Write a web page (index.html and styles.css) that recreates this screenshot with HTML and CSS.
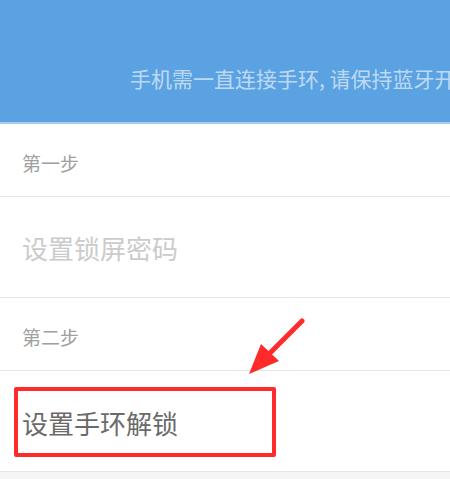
FILE: index.html
```html
<!DOCTYPE html>
<html lang="zh-CN">
<head>
<meta charset="utf-8">
<link rel="stylesheet" href="styles.css">
</head>
<body>
<div class="page">
  <header class="hero">
    <p class="hero-text">手机需一直连接手环, 请保持蓝牙开启</p>
  </header>
  <ul class="list">
    <li class="row step">第一步</li>
    <li class="row item disabled">设置锁屏密码</li>
    <li class="row step">第二步</li>
    <li class="row item active"><span class="highlight">设置手环解锁</span></li>
  </ul>
  <svg class="arrow" width="70" height="70" viewBox="0 0 70 70" aria-hidden="true">
    <line x1="54" y1="3" x2="16" y2="41" stroke="#ff2a2a" stroke-width="5" stroke-linecap="round"/>
    <polygon points="1,56 13,26 31,43" fill="#ff2a2a"/>
  </svg>
</div>
</body>
</html>
```
FILE: styles.css
```css
* { box-sizing: border-box; }
html, body { margin: 0; padding: 0; }
body {
  width: 450px;
  height: 479px;
  overflow: hidden;
  background: #f5f5f5;
  font-family: "Noto Sans CJK SC", "Noto Sans", sans-serif;
}
.page { position: relative; }
.hero {
  height: 124px;
  background: #5ba2e3;
  border-bottom: 2px solid #a9cdf0;
  display: flex;
  align-items: flex-start;
  overflow: hidden;
}
.hero-text {
  margin: 64px 0 0 130px;
  font-size: 21px;
  line-height: 28px;
  color: rgba(255, 255, 255, 0.62);
  white-space: nowrap;
}
.list {
  list-style: none;
  margin: 0;
  padding: 0;
  background: #fff;
}
.row {
  display: flex;
  align-items: center;
  border-bottom: 1px solid #e6e6e6;
  padding-left: 22px;
}
.step {
  height: 73px;
  padding-top: 4px;
  font-size: 19px;
  color: #a0a0a0;
}
.item {
  height: 101px;
  font-size: 26px;
}
.disabled { color: #cbcbcb; }
.active {
  color: #6a6a6a;
  padding: 16px 0 14px 14px;
  align-items: stretch;
}
.highlight {
  display: flex;
  align-items: center;
  width: 262px;
  padding-left: 4px;
  border: 4px solid #ff2a2a;
  border-radius: 2px;
}
.arrow {
  position: absolute;
  left: 248px;
  top: 318px;
}
```
